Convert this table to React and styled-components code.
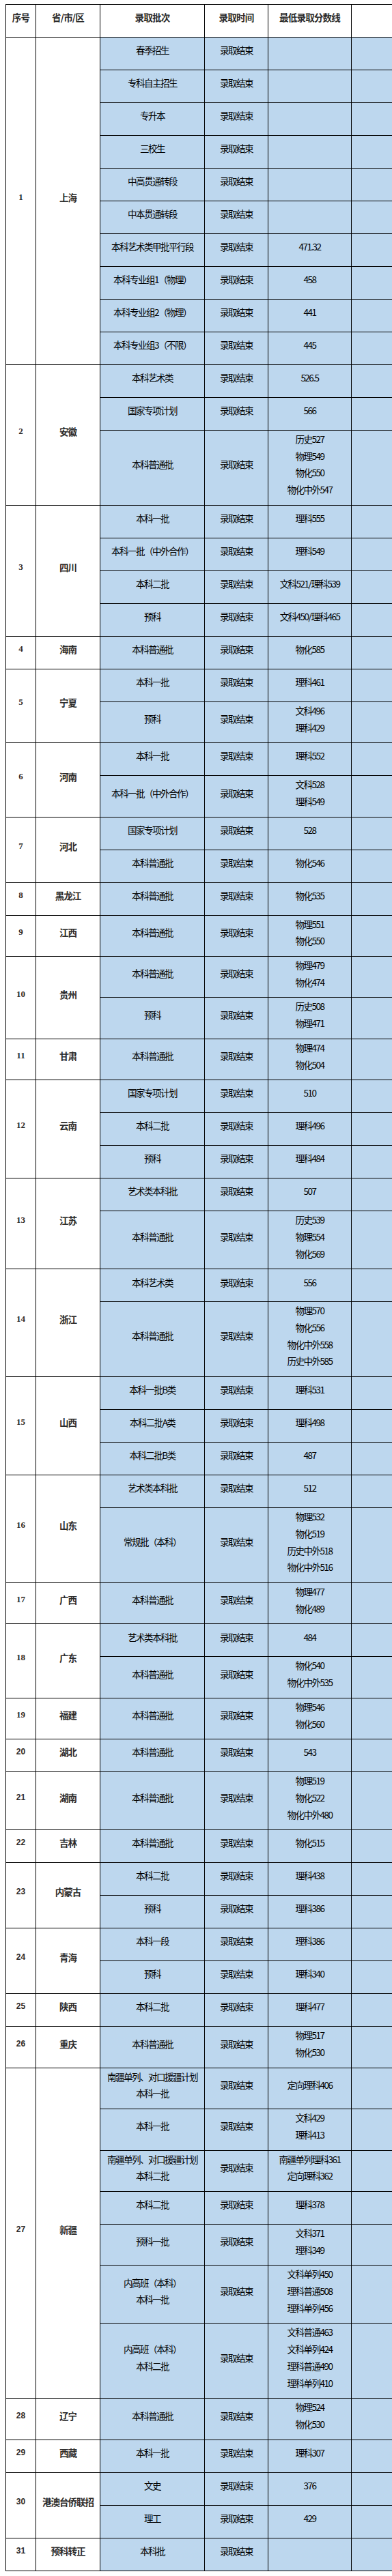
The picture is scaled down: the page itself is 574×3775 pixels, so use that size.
import React from "react";
import styled, { createGlobalStyle } from "styled-components";

const GlobalStyle = createGlobalStyle`
  body {
    margin: 6px 0 0 8px;
    background: #ffffff;
  }
`;

const Viewport = styled.div`
  width: 566px;
  overflow: hidden;
`;

const Table = styled.table`
  border-collapse: collapse;
  table-layout: fixed;
  width: 626px;
  font-family: "Noto Sans CJK SC", "Noto Sans", sans-serif;
  color: #000000;

  tr {
    height: 48px;
  }
  th,
  td {
    border: 1px solid #000000;
    padding: 0;
    text-align: center;
    vertical-align: middle;
  }
`;

const HeadCell = styled.th`
  background: #ffffff;
  font-size: 13.5px;
  font-weight: 700;
  letter-spacing: -0.8px;
  color: #2b2b2b;
`;

const IndexCell = styled.td`
  background: #ffffff;
  font-family: ${(p) =>
    p.$sans ? `"Liberation Sans", Arial, sans-serif` : `"Liberation Serif", "Times New Roman", serif`};
  font-size: ${(p) => (p.$sans ? "12px" : "13px")};
  font-weight: 700;
  color: #2b2b2b;
`;

const ProvCell = styled.td`
  background: #ffffff;
  font-size: 13.5px;
  font-weight: 700;
  letter-spacing: -1px;
  color: #2b2b2b;
`;

const DataCell = styled.td`
  background: #bdd7ee;
  font-size: 13.5px;
  letter-spacing: -1.5px;
`;

const Lines = styled.div`
  line-height: 24.7px;
  padding-bottom: 10px;
  white-space: nowrap;
`;

const groups = [
  {
    no: 1,
    prov: "上海",
    rows: [
      ["春季招生", ""],
      ["专科自主招生", ""],
      ["专升本", ""],
      ["三校生", ""],
      ["中高贯通转段", ""],
      ["中本贯通转段", ""],
      ["本科艺术类甲批平行段", "471.32"],
      ["本科专业组1（物理）", "458"],
      ["本科专业组2（物理）", "441"],
      ["本科专业组3（不限）", "445"],
    ],
  },
  {
    no: 2,
    prov: "安徽",
    rows: [
      ["本科艺术类", "526.5"],
      ["国家专项计划", "566"],
      ["本科普通批", "历史527\n物理549\n物化550\n物化中外547"],
    ],
  },
  {
    no: 3,
    prov: "四川",
    rows: [
      ["本科一批", "理科555"],
      ["本科一批（中外合作）", "理科549"],
      ["本科二批", "文科521/理科539"],
      ["预科", "文科450/理科465"],
    ],
  },
  { no: 4, prov: "海南", rows: [["本科普通批", "物化585"]] },
  {
    no: 5,
    prov: "宁夏",
    rows: [
      ["本科一批", "理科461"],
      ["预科", "文科496\n理科429"],
    ],
  },
  {
    no: 6,
    prov: "河南",
    rows: [
      ["本科一批", "理科552"],
      ["本科一批（中外合作）", "文科528\n理科549"],
    ],
  },
  {
    no: 7,
    prov: "河北",
    rows: [
      ["国家专项计划", "528"],
      ["本科普通批", "物化546"],
    ],
  },
  { no: 8, prov: "黑龙江", rows: [["本科普通批", "物化535"]] },
  { no: 9, prov: "江西", rows: [["本科普通批", "物理551\n物化550"]] },
  {
    no: 10,
    prov: "贵州",
    rows: [
      ["本科普通批", "物理479\n物化474"],
      ["预科", "历史508\n物理471"],
    ],
  },
  { no: 11, prov: "甘肃", rows: [["本科普通批", "物理474\n物化504"]] },
  {
    no: 12,
    prov: "云南",
    rows: [
      ["国家专项计划", "510"],
      ["本科二批", "理科496"],
      ["预科", "理科484"],
    ],
  },
  {
    no: 13,
    prov: "江苏",
    rows: [
      ["艺术类本科批", "507"],
      ["本科普通批", "历史539\n物理554\n物化569"],
    ],
  },
  {
    no: 14,
    prov: "浙江",
    rows: [
      ["本科艺术类", "556"],
      ["本科普通批", "物理570\n物化556\n物化中外558\n历史中外585"],
    ],
  },
  {
    no: 15,
    prov: "山西",
    rows: [
      ["本科一批B类", "理科531"],
      ["本科二批A类", "理科498"],
      ["本科二批B类", "487"],
    ],
  },
  {
    no: 16,
    prov: "山东",
    rows: [
      ["艺术类本科批", "512"],
      ["常规批（本科）", "物理532\n物化519\n历史中外518\n物化中外516"],
    ],
  },
  { no: 17, prov: "广西", rows: [["本科普通批", "物理477\n物化489"]] },
  {
    no: 18,
    prov: "广东",
    rows: [
      ["艺术类本科批", "484"],
      ["本科普通批", "物化540\n物化中外535"],
    ],
  },
  { no: 19, prov: "福建", rows: [["本科普通批", "物理546\n物化560"]] },
  { no: 20, prov: "湖北", rows: [["本科普通批", "543"]] },
  { no: 21, prov: "湖南", rows: [["本科普通批", "物理519\n物化522\n物化中外480"]] },
  { no: 22, prov: "吉林", rows: [["本科普通批", "物化515"]] },
  {
    no: 23,
    prov: "内蒙古",
    rows: [
      ["本科二批", "理科438"],
      ["预科", "理科386"],
    ],
  },
  {
    no: 24,
    prov: "青海",
    rows: [
      ["本科一段", "理科386"],
      ["预科", "理科340"],
    ],
  },
  { no: 25, prov: "陕西", rows: [["本科二批", "理科477"]] },
  { no: 26, prov: "重庆", rows: [["本科普通批", "物理517\n物化530"]] },
  {
    no: 27,
    prov: "新疆",
    rows: [
      ["南疆单列、对口援疆计划\n本科一批", "定向理科406"],
      ["本科一批", "文科429\n理科413"],
      ["南疆单列、对口援疆计划\n本科二批", "南疆单列理科361\n定向理科362"],
      ["本科二批", "理科378"],
      ["预科一批", "文科371\n理科349"],
      ["内高班（本科）\n本科一批", "文科单列450\n理科普通508\n理科单列456"],
      ["内高班（本科）\n本科二批", "文科普通463\n文科单列424\n理科普通490\n理科单列410"],
    ],
  },
  { no: 28, prov: "辽宁", rows: [["本科普通批", "物理524\n物化530"]] },
  { no: 29, prov: "西藏", rows: [["本科一批", "理科307"]] },
  {
    no: 30,
    prov: "港澳台侨联招",
    rows: [
      ["文史", "376"],
      ["理工", "429"],
    ],
  },
  { no: 31, prov: "预科转正", rows: [["本科批", ""]] },
];

function MultiLine({ text }) {
  const parts = text ? text.split("\n") : [""];
  return (
    <Lines>
      {parts.map((t, i) => (
        <div key={i}>{t || "\u00a0"}</div>
      ))}
    </Lines>
  );
}

function App() {
  return (
    <>
      <GlobalStyle />
      <Viewport>
        <Table>
          <colgroup>
            <col style={{ width: 44 }} />
            <col style={{ width: 94 }} />
            <col style={{ width: 153 }} />
            <col style={{ width: 93 }} />
            <col style={{ width: 122 }} />
            <col style={{ width: 120 }} />
          </colgroup>
          <thead>
            <tr>
              <HeadCell><Lines>序号</Lines></HeadCell>
              <HeadCell><Lines>省/市/区</Lines></HeadCell>
              <HeadCell><Lines>录取批次</Lines></HeadCell>
              <HeadCell><Lines>录取时间</Lines></HeadCell>
              <HeadCell><Lines>最低录取分数线</Lines></HeadCell>
              <HeadCell />
            </tr>
          </thead>
          <tbody>
            {groups.map((g) =>
              g.rows.map(([batch, score], i) => (
                <tr key={`${g.no}-${i}`}>
                  {i === 0 && (
                    <IndexCell rowSpan={g.rows.length} $sans={g.no >= 20}>
                      <Lines>{g.no}</Lines>
                    </IndexCell>
                  )}
                  {i === 0 && (
                    <ProvCell rowSpan={g.rows.length}>
                      <Lines>{g.prov}</Lines>
                    </ProvCell>
                  )}
                  <DataCell>
                    <MultiLine text={batch} />
                  </DataCell>
                  <DataCell>
                    <MultiLine text="录取结束" />
                  </DataCell>
                  <DataCell>
                    <MultiLine text={score} />
                  </DataCell>
                  <DataCell />
                </tr>
              ))
            )}
          </tbody>
        </Table>
      </Viewport>
    </>
  );
}

export default App;
